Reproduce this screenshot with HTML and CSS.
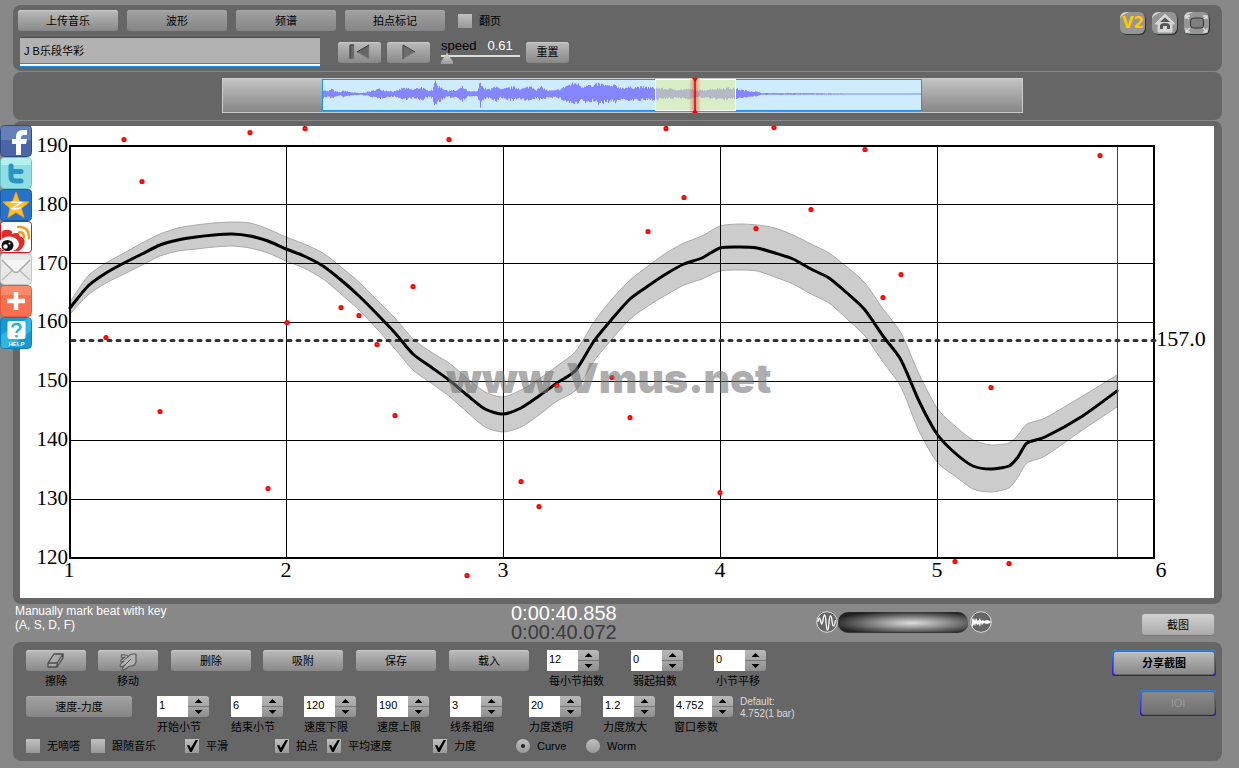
FILE: index.html
```html
<!DOCTYPE html>
<html lang="zh-CN">
<head>
<meta charset="utf-8">
<title>Vmus.net</title>
<link rel="stylesheet" href="styles.css">
</head>
<body>
<nav class="share" aria-label="Share">
  <a href="#" aria-label="Facebook"><svg viewBox="0 0 32 32"><rect x=".5" y=".5" width="31" height="31" rx="4" fill="#4966a6" stroke="#2f4a85"/><path d="M1 4q0-3 3-3h24q3 0 3 3v11H1z" fill="#6580b8"/><path d="M16 30V19h-4v-5h4v-2q0-7 7-7h4v5h-3q-3 0-3 3v1h6l-1 5h-5v11z" fill="#fff"/></svg></a>
  <a href="#" aria-label="Twitter"><svg viewBox="0 0 32 32"><rect x=".5" y=".5" width="31" height="31" rx="4" fill="#8fe0e4" stroke="#6ac4ca"/><path d="M1 4q0-3 3-3h24q3 0 3 3v4H1z" fill="#b4f0f0"/><path d="M11 9v11q0 4 5 4h5M11 14.500h10" fill="none" stroke="#2a93c4" stroke-width="5" stroke-linecap="round" stroke-linejoin="round"/></svg></a>
  <a href="#" aria-label="Qzone"><svg viewBox="0 0 32 32"><rect x=".5" y=".5" width="31" height="31" rx="3" fill="#2872c8" stroke="#1d5bab"/><path d="M16 3l3.500 9.500 9.500.5-7.500 6.500 2.500 9L16 23.500 8 28.500l2-9L3 13l9.500-.5z" fill="#fdc12c" stroke="#f39b15"/><path d="M11 13.500q5-1 10 0l-9 6q5 1 9-1" fill="none" stroke="#fff" stroke-width="1.600"/></svg></a>
  <a href="#" aria-label="Weibo"><svg viewBox="0 0 32 32"><rect x=".5" y=".5" width="31" height="31" rx="3" fill="#fff" stroke="#c3181c"/><path d="M1.500 19V11q2-3 8-2 4 1 2 4 8-3 8 2 6 2 5 7t-6 8H1.500z" fill="#e12a2b"/><ellipse cx="9" cy="23" rx="10" ry="7.500" fill="#fff"/><ellipse cx="7.500" cy="24.500" rx="6" ry="5.500" fill="#111"/><circle cx="5.500" cy="25.500" r="2.200" fill="#fff"/><circle cx="9.500" cy="22.500" r="1" fill="#fff"/><path d="M18 6q11-1 11 11M19 11.500q5-1 5 5" fill="none" stroke="#f59a1b" stroke-width="2.500" stroke-linecap="round"/></svg></a>
  <a href="#" aria-label="Email"><svg viewBox="0 0 32 32"><rect x=".5" y=".5" width="31" height="31" rx="4" fill="#e9e9e9" stroke="#c4c4c4"/><path d="M2 27l12-11M30 27L18 16" stroke="#bbb" stroke-width="1.500"/><path d="M2 7l11 11q3 3 6 0L30 7" fill="#f4f4f4" stroke="#aaa" stroke-width="1.500"/></svg></a>
  <a href="#" aria-label="More"><svg viewBox="0 0 32 32"><rect x=".5" y=".5" width="31" height="31" rx="4" fill="#f8704f" stroke="#e8583a"/><path d="M1 4q0-3 3-3h24q3 0 3 3v6H1z" fill="#fb8a6c"/><path d="M16 7v18M7 16h18" stroke="#fff" stroke-width="4.500"/></svg></a>
  <a href="#" aria-label="Help"><svg viewBox="0 0 32 32"><rect x=".5" y=".5" width="31" height="31" rx="4" fill="#159bd2" stroke="#0b7fb5"/><path d="M1 18L28 1q3 0 3 3v10L8 31H4q-3 0-3-3z" fill="#2fb5e6"/><rect x="7.500" y="4" width="18" height="18" rx="2" fill="#fff"/><path d="M12.500 10.500q0-3.500 4-3.500t4 3q0 2-2 3t-2 3M16.500 18v2.500" fill="none" stroke="#26b7c9" stroke-width="2.500"/><text x="16.500" y="29" class="help-text">HELP</text></svg></a>
</nav>

<header class="panel toolbar">
  <div class="tools">
    <div class="tool-row tabs">
      <button class="btn bright">上传音乐</button>
      <button class="btn">波形</button>
      <button class="btn">频谱</button>
      <button class="btn">拍点标记</button>
      <label class="check page-turn"><input type="checkbox"><span>翻页</span></label>
    </div>
    <div class="tool-row transport">
      <input class="track-name" type="text" aria-label="Track name" value="J B乐段华彩">
      <button class="btn small bright" aria-label="Back to start"><svg viewBox="0 0 42 20"><path d="M11 3h4v14h-4zM30 3v14L18 10z" fill="#666" stroke="#888" stroke-width=".6"/><path d="M11 17V3h4M30 3L18 10" fill="none" stroke="#333"/></svg></button>
      <button class="btn small bright" aria-label="Play"><svg viewBox="0 0 42 20"><path d="M15 3v14l12-7z" fill="#6c6c6c" stroke="#888" stroke-width=".6"/><path d="M15 17V3l12 7" fill="none" stroke="#444"/></svg></button>
      <div class="speed">
        <div class="speed-text"><label for="speed">speed</label><output for="speed">0.61</output></div>
        <input id="speed" type="range" min="0" max="10" value="0">
      </div>
      <button class="btn small bright">重置</button>
    </div>
  </div>
  <div class="site-links">
    <a href="#" aria-label="V2"><svg viewBox="0 0 28 26"><use href="#tile"/><text x="14" y="17" class="v2">V2</text></svg></a>
    <a href="#" aria-label="Home"><svg viewBox="0 0 28 26"><g id="tile"><rect x="2" y="2" width="25" height="22" rx="6" fill="#2a3232"/><rect x="1" y="1" width="25" height="22" rx="6" fill="#959595"/><path d="M1 8q0-7 7-7h2q-4 2-6 3t-3 4z" fill="#d5d5d5"/></g><path d="M4 13L14 3l10 10h-3v8H7v-8z" fill="#d5d5d5" stroke="#d5d5d5" stroke-linejoin="round"/><path d="M9 11l5-4.500 5 4.500zM9 18v-3q0-3 5-3t5 3v3h-3v-3h-4v3z" fill="#555"/></svg></a>
    <a href="#" aria-label="Full screen"><svg viewBox="0 0 28 26"><use href="#tile"/><rect x="7.500" y="7" width="13" height="10" rx="3" fill="#808080" stroke="#333"/><path d="M3 8V5h4M3 5l3 3M20 5h4v3M24 5l-3 3M3 17v4h4M3 21l4-4M20 21h4v-4M24 21l-4-4" fill="none" stroke="#ddd" stroke-width="1.300"/></svg></a>
  </div>
</header>

<section class="panel overview">
  <svg class="wave" viewBox="0 0 801 35" role="img" aria-label="Waveform overview">
    <defs>
      <linearGradient id="metal" x1="0" y1="0" x2="0" y2="1"><stop offset="0" stop-color="#c4c4c4"/><stop offset="1" stop-color="#858585"/></linearGradient>
      <linearGradient id="glow"><stop offset="0" stop-color="#e33" stop-opacity="0"/><stop offset=".5" stop-color="#d22" stop-opacity=".5"/><stop offset="1" stop-color="#e33" stop-opacity="0"/></linearGradient>
    </defs>
    <rect x=".5" y=".5" width="800" height="34" fill="url(#metal)" stroke="#ccc"/>
    <rect x="100.500" y="1.500" width="599" height="31" fill="#cfecff" stroke="#1796ec"/>
    <path id="wave" fill="#8585ff"/>
    <rect x="433.500" y="1.500" width="80" height="31" fill="#e2f08e" fill-opacity=".5" stroke="#fff"/>
    <rect x="467" y="1" width="12" height="33" fill="url(#glow)"/>
    <path d="M473 1v33" stroke="#d20a0a" stroke-width="1.500"/>
    <path d="M470 0h6l-3 4zM470 35h6l-3-4z" fill="#e00808"/>
  </svg>
</section>

<main class="panel chart-panel">
  <svg class="chart" viewBox="20 126 1194 472" role="img" aria-label="Tempo curve">
    <path id="band" class="band"/>
    <path class="grid" d="M70 204.500H1154M70 263.500H1154M70 322.500H1154M70 381.500H1154M70 440.500H1154M70 499.500H1154M286.500 146V558M503.500 146V558M720.500 146V558M937.500 146V558"/>
    <rect class="frame" x="70" y="146" width="1084" height="412"/>
    <path class="average" d="M72 340.500H1155"/>
    <path id="curve" class="curve"/>
    <g id="dots" class="dots"></g>
    <path class="cursor" d="M1117.500 147V557"/>
    <text x="446" y="393" class="watermark">www.Vmus.net</text>
    <g class="axis y">
      <text x="68" y="152">190</text><text x="68" y="211">180</text><text x="68" y="270">170</text><text x="68" y="328">160</text>
      <text x="68" y="387">150</text><text x="68" y="446">140</text><text x="68" y="505">130</text><text x="68" y="564">120</text>
    </g>
    <g class="axis x">
      <text x="69" y="577">1</text><text x="286" y="577">2</text><text x="503" y="577">3</text><text x="720" y="577">4</text><text x="937" y="577">5</text><text x="1161" y="577">6</text>
      <text x="1181" y="346">157.0</text>
    </g>
  </svg>
</main>

<section class="status">
  <p class="hint">Manually mark beat with key<br>(A, S, D, F)</p>
  <div class="time"><span>0:00:40.858</span><span class="total">0:00:40.072</span></div>
  <div class="zoom">
    <svg viewBox="0 0 22 22"><circle cx="11" cy="11" r="10.300" fill="#666" stroke="#ddd"/><path d="M2 11q1-6 2-3t1.500 5q1 0 1.500-4t1.500-5q1 0 1.500 7t1.500 8q1 0 1.500-7t1.500-7q1 0 1.500 5t1.500 5q1 0 2-6" fill="none" stroke="#fff" stroke-width="1.300"/></svg>
    <input type="range" aria-label="Zoom" value="50">
    <svg viewBox="0 0 22 22"><circle cx="11" cy="11" r="10.300" fill="#666" stroke="#ddd"/><path d="M2 6l1 3 1-2 1 3 1-3 1 2 1 1 2-3 1 3 2-1 1 1 3-1 3 1 1 1-1 1-3 1-3-1-2 2-1-2-1 4-1-3-2 1-1-2-1 3-1-2-1 2-1 1z" fill="#fff"/></svg>
  </div>
  <button class="btn pale">截图</button>
</section>

<footer class="panel controls">
  <div class="settings">
    <div class="row first">
      <div class="captioned"><button class="btn bright" aria-labelledby="erase-cap"><svg viewBox="0 0 60 20"><path d="M22 12l6-9h9l-6 9zM22 12v4h9v-4M31 16l6-9V3" fill="#aaa" stroke="#4c4c4c" stroke-width="1.300" stroke-linejoin="round"/></svg></button><span id="erase-cap">擦除</span></div>
      <div class="captioned"><button class="btn bright" aria-labelledby="move-cap"><svg viewBox="0 0 60 20"><path d="M23 5q1-2 4-1 3 0 3 2 2-3 4-3h4v8q-1 4-5 4-3 0-4 2-2 2-5 2 0-2 3-5-4 3-5 1 0-2 4-5-4 2-3-1l4-3-3 1z" fill="#b2b2b2" stroke="#5c5c5c" stroke-width="1.200" stroke-linejoin="round"/><path d="M26 9l4-3M27 14l6-6" stroke="#5c5c5c"/></svg></button><span id="move-cap">移动</span></div>
      <button class="btn bright wide">删除</button>
      <button class="btn bright wide">吸附</button>
      <button class="btn bright wide">保存</button>
      <button class="btn bright wide">载入</button>
      <div class="field"><span class="spin"><input id="f1" type="text" value="12"><span class="step"><button aria-label="Increase"></button><button aria-label="Decrease"></button></span></span><label for="f1">每小节拍数</label></div>
      <div class="field"><span class="spin"><input id="f2" type="text" value="0"><span class="step"><button aria-label="Increase"></button><button aria-label="Decrease"></button></span></span><label for="f2">弱起拍数</label></div>
      <div class="field"><span class="spin"><input id="f3" type="text" value="0"><span class="step"><button aria-label="Increase"></button><button aria-label="Decrease"></button></span></span><label for="f3">小节平移</label></div>
    </div>
    <div class="row second">
      <button class="btn mode">速度-力度</button>
      <div class="field"><span class="spin"><input id="g1" type="text" value="1"><span class="step"><button aria-label="Increase"></button><button aria-label="Decrease"></button></span></span><label for="g1">开始小节</label></div>
      <div class="field"><span class="spin"><input id="g2" type="text" value="6"><span class="step"><button aria-label="Increase"></button><button aria-label="Decrease"></button></span></span><label for="g2">结束小节</label></div>
      <div class="field"><span class="spin"><input id="g3" type="text" value="120"><span class="step"><button aria-label="Increase"></button><button aria-label="Decrease"></button></span></span><label for="g3">速度下限</label></div>
      <div class="field"><span class="spin"><input id="g4" type="text" value="190"><span class="step"><button aria-label="Increase"></button><button aria-label="Decrease"></button></span></span><label for="g4">速度上限</label></div>
      <div class="field"><span class="spin"><input id="g5" type="text" value="3"><span class="step"><button aria-label="Increase"></button><button aria-label="Decrease"></button></span></span><label for="g5">线条粗细</label></div>
      <div class="field"><span class="spin"><input id="g6" type="text" value="20"><span class="step"><button aria-label="Increase"></button><button aria-label="Decrease"></button></span></span><label for="g6">力度透明</label></div>
      <div class="field"><span class="spin"><input id="g7" type="text" value="1.2"><span class="step"><button aria-label="Increase"></button><button aria-label="Decrease"></button></span></span><label for="g7">力度放大</label></div>
      <div class="field long"><span class="spin"><input id="g8" type="text" value="4.752"><span class="step"><button aria-label="Increase"></button><button aria-label="Decrease"></button></span></span><label for="g8">窗口参数</label></div>
      <p class="default">Default:<br>4.752(1 bar)</p>
    </div>
    <div class="row third">
      <label class="check"><input type="checkbox"><span>无嘀嗒</span></label>
      <label class="check"><input type="checkbox"><span>跟随音乐</span></label>
      <label class="check"><input type="checkbox" checked><span>平滑</span></label>
      <label class="check"><input type="checkbox" checked><span>拍点</span></label>
      <label class="check"><input type="checkbox" checked><span>平均速度</span></label>
      <label class="check"><input type="checkbox" checked><span>力度</span></label>
      <label class="check"><input type="radio" name="view" checked><span>Curve</span></label>
      <label class="check"><input type="radio" name="view"><span>Worm</span></label>
    </div>
  </div>
  <div class="actions">
    <div class="ring"><button class="btn bright share-shot">分享截图</button></div>
    <div class="ring"><button class="btn off" disabled>IOI</button></div>
  </div>
</footer>
<script src="chart.js"></script>
</body>
</html>
```

FILE: styles.css
```css
* { box-sizing: border-box; }
body {
  margin: 0;
  padding: 5px 17px 7px 13px;
  background: #888;
  color: #000;
  font: 11px/14px "Liberation Sans", "Noto Sans CJK SC", sans-serif;
  display: flex;
  flex-direction: column;
}
p { margin: 0; }
button, input { font: inherit; color: inherit; margin: 0; }
svg { display: block; }
.panel { background: #666; border-radius: 8px; margin-bottom: 1px; }

.share { position: absolute; left: 0; top: 125px; width: 32px; }
.share a { display: block; height: 32px; }
.help-text { font: bold 6px "Liberation Sans", sans-serif; fill: #fff; text-anchor: middle; }

.btn {
  width: 100px;
  height: 21px;
  padding: 0;
  border: 0;
  border-radius: 3px;
  background: linear-gradient(#a2a2a2, #858585);
  box-shadow: inset 0 1px #aaa;
  white-space: nowrap;
}
.btn svg { height: 20px; margin: 0 auto; }
.btn.bright { background: linear-gradient(#bcbcbc, #888); box-shadow: inset 0 1px #c8c8c8; }
.btn.pale { width: 72px; background: linear-gradient(#d2d2d2, #aaa); box-shadow: 0 1px #777; }
.btn.small { width: 43px; }
.btn.wide { width: 80px; }
.btn.mode { width: 106px; }

.toolbar { display: flex; justify-content: space-between; height: 66px; padding: 5px 11px 3px 5px; }
.tool-row { display: flex; align-items: center; }
.tabs { gap: 9px; }
.page-turn { margin-left: 4px; }
.transport { margin-top: 6px; padding-left: 2px; gap: 6px; }
.track-name {
  width: 300px;
  height: 30px;
  margin-right: 12px;
  padding: 0 4px 4px;
  border: 0;
  border-top: 1px solid #4c4c4c;
  border-bottom: 1px solid #0a94f0;
  background: linear-gradient(to top, #fff 2px, #0a94f0 2px, #0a94f0 3px, #b2b2b2 3px);
}
.speed { width: 79px; margin: 0 0 0 5px; }
.speed-text { display: flex; gap: 11px; font-size: 13px; line-height: 13px; }
.speed-text output { color: #fff; }
.speed input {
  appearance: none;
  display: block;
  width: 100%;
  height: 14px;
  background: linear-gradient(#ddd, #ddd) 0 3px / 100% 2px no-repeat;
}
.speed input::-webkit-slider-thumb {
  appearance: none;
  width: 12px;
  height: 11px;
  background: linear-gradient(#ddd, #999);
  clip-path: polygon(50% 0, 100% 80%, 100% 100%, 0 100%, 0 80%);
}
.site-links { display: flex; gap: 4px; padding-top: 1px; }
.site-links svg { width: 28px; height: 26px; }
.v2 { font: bold 15px "DejaVu Sans", sans-serif; fill: #ffc800; text-anchor: middle; }

.overview { padding: 6px 0 7px 9px; }
.wave { width: 801px; max-width: 100%; margin: 0 auto; }

.chart-panel { padding: 5px 8px 6px 7px; margin: 0; }
.chart { width: 100%; background: #fff; }
.band { fill: #ccc; stroke: #aaa; }
.grid { stroke: #000; fill: none; }
.frame { stroke: #000; stroke-width: 2; fill: none; }
.average { stroke: #333; stroke-width: 3; stroke-dasharray: 3 6; stroke-linecap: round; }
.curve { stroke: #000; stroke-width: 3; fill: none; stroke-linecap: round; }
.dots { fill: #f88; stroke: #f00; stroke-width: 2; }
.cursor { stroke: #e00000; }
.watermark { font: 900 41px Inter, sans-serif; fill: #777; fill-opacity: .6; }
.axis { font: 21px "Liberation Serif", serif; }
.axis.y { text-anchor: end; }
.axis.x { font-size: 22px; text-anchor: middle; }

.status {
  display: grid;
  grid-template-columns: 496px 305px 1fr auto;
  align-items: start;
  height: 38px;
  padding: 0 8px 0 2px;
}
.hint { color: #fff; font-size: 12px; }
.time { display: flex; flex-direction: column; font-size: 20px; line-height: 19px; color: #fff; }
.total { color: #3c3c3c; }
.zoom { display: flex; align-items: center; padding-top: 7px; }
.zoom svg { width: 22px; height: 22px; }
.zoom input {
  appearance: none;
  width: 130px;
  height: 21px;
  margin-right: 2px;
  border-radius: 10px;
  background: radial-gradient(ellipse at 57% 55%, #ddd, #999 30%, #222 78%);
  border-bottom: 1px solid #333;
}
.zoom input::-webkit-slider-thumb { appearance: none; width: 1px; height: 1px; }
.status .btn { margin-top: 10px; }

.controls { display: flex; justify-content: space-between; padding: 8px 6px 8px 13px; margin: 0; }
.row { display: grid; align-items: start; }
.first { grid-template-columns: 72px 73px 92px 93px 93px 98px 84px 83px 52px; }
.first .field label { padding-left: 2px; }
.second { grid-template-columns: 131px 74px 73px 73px 73px 79px 74px 71px 66px 70px; margin-top: 8px; }
.third { grid-template-columns: 65px 94px 90px 52px 106px 83px 70px 60px; margin-top: 5px; }
.captioned { display: flex; flex-direction: column; align-items: center; gap: 3px; width: 60px; }
.captioned .btn { width: 60px; }
.field { display: flex; flex-direction: column; gap: 3px; width: 52px; white-space: nowrap; }
.spin { display: flex; height: 21px; }
.spin input { width: 31px; padding: 0 2px 4px; border: 0; background: #fff; }
.long { width: 59px; }
.long .spin input { width: 38px; }
.step { display: flex; flex-direction: column; width: 21px; }
.step button {
  flex: 1;
  display: grid;
  place-items: center;
  min-height: 0;
  padding: 0;
  border: 0;
  border-radius: 0 3px 0 0;
  background: linear-gradient(#b8b8b8, #a6a6a6);
}
.step button::before {
  content: "";
  width: 8px;
  height: 4px;
  background: #000;
  clip-path: polygon(50% 0, 100% 100%, 0 100%);
}
.step button + button { border-top: 1px solid #777; border-radius: 0 0 3px 0; background: linear-gradient(#a4a4a4, #8f8f8f); }
.step button + button::before { clip-path: polygon(0 0, 100% 0, 50% 100%); }
.default { color: #ddd; font-size: 10px; line-height: 12px; }

.check { display: flex; align-items: center; gap: 7px; height: 14px; white-space: nowrap; }
.check input {
  appearance: none;
  display: grid;
  place-items: center;
  width: 14px;
  height: 14px;
  background: linear-gradient(#c0c0c0, #999);
}
.check input[type="checkbox"]:checked::after {
  content: "";
  width: 12px;
  height: 12px;
  background: #000;
  clip-path: polygon(8% 45%, 26% 42%, 40% 66%, 80% 0, 100% 0, 48% 100%, 34% 100%);
}
.check input[type="radio"] { border-radius: 50%; }
.check input[type="radio"]:checked::after { content: ""; width: 4px; height: 4px; border-radius: 50%; background: #222; }

.actions { display: flex; flex-direction: column; align-items: flex-end; gap: 14px; }
.ring { display: flex; padding: 1px; border-radius: 3px; background: linear-gradient(#2f82e0, #3a08c8); }
.ring .btn { width: 74px; height: 24px; border: 1px solid #666; }
.ring .share-shot { width: 102px; font-weight: bold; }
.ring .off { background: linear-gradient(#8a8a8a, #707070); box-shadow: none; color: #999; }
```

FILE: chart.js
```js
const tempo = [
  // x, curve, band top, band bottom
  [70,308,302,314],[88,286,276,295],[106,273,263,283],[124,263,253,274],[142,254,243,265],[160,245,234,256],
  [178,240,228,251],[196,237,225,249],[214,235,223,247],[232,234,222,246],[250,236,223,248],[268,241,229,253],
  [286,249,237,261],[304,256,244,268],[323,266,253,279],[341,280,267,294],[359,296,282,310],[377,314,300,329],
  [395,333,318,349],[413,354,339,370],[431,367,352,383],[449,380,363,396],[467,395,378,412],[485,409,392,427],
  [503,414,397,432],[521,408,390,427],[539,396,379,415],[557,383,366,401],[576,370,351,390],
  [594,341,322,361],[612,319,299,339],[630,299,280,319],[648,286,266,306],[666,274,253,295],[684,264,243,285],
  [702,258,236,279],[720,248,226,271],[740,247,224,270],[757,248,225,271],[775,253,228,277],[793,259,235,284],
  [811,269,244,294],[829,278,253,303],[847,293,267,319],[865,310,283,336],[883,336,309,362],[901,360,333,387],
  [919,401,374,431],[937,434,408,462],[955,453,426,476],[973,466,440,489],[991,469,445,492],[1009,466,443,488],
  [1018,457,435,477],[1027,443,424,463],[1045,437,418,456],[1081,417,397,431],[1117,391,375,407]
];
const beats = [
  [124,139],[142,181],[106,337],[160,411],[250,132],[305,128],[268,488],[287,322],[341,307],[359,315],[377,344],
  [395,415],[413,286],[449,139],[467,575],[521,481],[539,506],[557,385],[612,377],[630,417],[648,231],[666,128],
  [684,197],[720,492],[756,228],[774,127],[811,209],[865,149],[883,297],[901,274],[955,561],[991,387],[1009,563],[1100,155]
];
const levels = [
  [101,5],[106,3],[109,6],[113,3],[118,2],[121,4],[128,2],[138,1],[148,3],[156,6],[163,4],[173,3],[180,7],[190,5],
  [199,8],[204,4],[210,5],[212,15],[216,9],[219,8],[224,4],[234,4],[240,8],[246,3],[255,3],[258,15],[261,7],[268,5],
  [274,10],[278,5],[290,8],[300,6],[309,9],[314,5],[319,8],[325,4],[333,4],[338,6],[345,10],[354,13],[360,8],[365,12],
  [370,8],[375,12],[380,11],[388,9],[393,10],[398,7],[410,8],[420,8],[433,7],[443,6],[458,5],[466,6],[478,4],[490,6],
  [505,7],[514,6],[523,4],[533,3],[540,1],[580,1],[699,0]
];

// Cubic segments through every point, tangents taken from the neighbours.
function smooth(points) {
  let d = "";
  for (let i = 0; i < points.length - 1; i++) {
    const a = points[i - 1] || points[i];
    const b = points[i];
    const c = points[i + 1];
    const e = points[i + 2] || c;
    d += `C${b[0] + (c[0] - a[0]) / 8} ${b[1] + (c[1] - a[1]) / 8} ` +
      `${c[0] - (e[0] - b[0]) / 8} ${c[1] - (e[1] - b[1]) / 8} ${c[0]} ${c[1]}`;
  }
  return d;
}
const centre = tempo.map((t) => [t[0], t[1]]);
const upper = tempo.map((t) => [t[0], t[2]]);
const lower = tempo.map((t) => [t[0], t[3]]).reverse();
document.getElementById("curve").setAttribute("d", `M${centre[0]}` + smooth(centre));
document.getElementById("band").setAttribute("d", `M${upper[0]}${smooth(upper)}L${lower[0]}${smooth(lower)}Z`);

for (const [x, y] of beats) {
  const dot = document.createElementNS("http://www.w3.org/2000/svg", "circle");
  dot.setAttribute("cx", x);
  dot.setAttribute("cy", y + 0.5);
  dot.setAttribute("r", 1.6);
  document.getElementById("dots").append(dot);
}

let seed = 7;
function noise() {
  seed = (seed * 16807) % 2147483647;
  return seed / 2147483647;
}
let bars = "";
let k = 0;
for (let x = 101; x < 699; x++) {
  while (levels[k + 1][0] < x) k++;
  const [x0, a] = levels[k];
  const [x1, b] = levels[k + 1];
  const level = a + (b - a) * (x - x0) / (x1 - x0);
  const up = Math.max(0.5, level * (0.65 + 0.35 * noise()));
  const down = Math.max(0.5, level * (0.55 + 0.4 * noise()));
  bars += `M${x} ${16 - up}h1V${16 + down}h-1z`;
}
document.getElementById("wave").setAttribute("d", bars);
```
